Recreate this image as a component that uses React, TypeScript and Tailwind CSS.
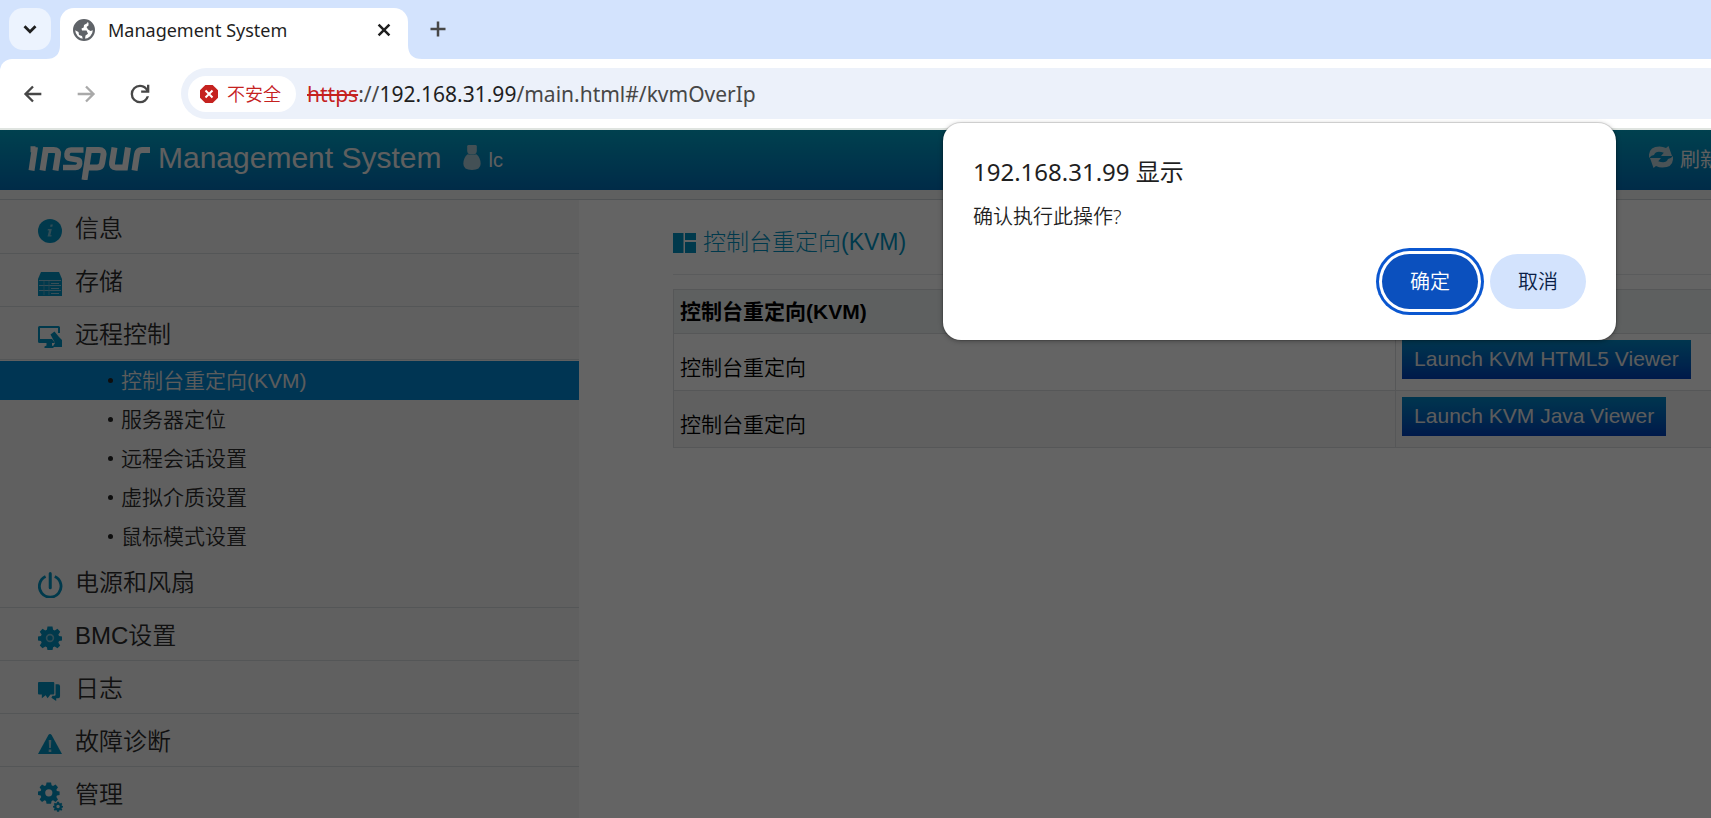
import React from "react";

type IconProps = { className?: string };

const Svg = ({ size, children }: { size: number; children: React.ReactNode }) => (
  <svg width={size} height={size} viewBox="0 0 24 24" fill="currentColor" aria-hidden="true" className="shrink-0">
    {children}
  </svg>
);

const GEAR =
  "M9.500 0.500h5l.6 3.200 1.600.8L19.500 2.800l2.700 3-1.800 2.700.6 1.600 3 .5v3.800l-3 .6-.6 1.700 1.800 2.700-2.700 2.800-2.800-1.800-1.600.8-.6 3h-5l-.6-3-1.600-.8-2.800 1.800-2.700-2.800 1.800-2.700-.6-1.700-3-.6v-3.800l3-.5.6-1.600-1.800-2.700 2.700-3 2.800 1.700 1.600-.8z";

const GEAR_HOLE = "M12 8a4 4 0 1 0 0 8 4 4 0 0 0 0-8z";

const InfoIcon = () => (
  <Svg size={24}>
    <circle cx="12" cy="12" r="12" />
    <path d="M12.600 5.600h2.200l-.5 2.200h-2.200zM9.900 10h3.900l-1.500 6.200h1.400l-.3 1.400H9.500l1.500-6.200H9.600z" fill="#7cc0d8" />
  </Svg>
);

const StorageIcon = () => (
  <Svg size={24}>
    <path d="M3 0h18l3 7H0z" />
    <path d="M0 7h24v17H0z" />
    <path d="M1 8.500h22M1 13.500h22M1 18.500h22" stroke="#8cc3d8" strokeWidth="1.200" />
    <path d="M6 9v14M11 9v14" stroke="#5fabc6" strokeWidth=".8" />
    <path d="M13 11.500h8M13 16.500h8M13 21.500h8" stroke="#8cc3d8" strokeWidth="1" />
  </Svg>
);

const RemoteIcon = () => (
  <Svg size={24}>
    <path d="M1.500 1h19A1.500 1.500 0 0 1 22 2.500V8h-2V3H2v11h12l3 4h-3v2.500l1.500 1V23h-9v-1.500l2-1V18H1.500A1.500 1.500 0 0 1 0 16.500v-14A1.500 1.500 0 0 1 1.500 1z" />
    <path d="M12.500 9.500l4-3 4.500 5.500 3 3v7h-9.500l2.500-4z" />
  </Svg>
);

const PowerIcon = () => (
  <Svg size={26}>
    <path d="M7 4.200a10 10 0 1 0 8.500 0" fill="none" stroke="currentColor" strokeWidth="2.600" />
    <path d="M11.300 1.500v13" fill="none" stroke="currentColor" strokeWidth="2.800" strokeLinecap="round" />
  </Svg>
);

const GearIcon = () => (
  <Svg size={24}>
    <path d={GEAR} />
    <circle cx="12" cy="12" r="3.400" fill="none" stroke="#7cbdd4" strokeWidth="1.600" />
  </Svg>
);

const LogIcon = () => (
  <Svg size={23}>
    <path d="M1 2h15a1 1 0 0 1 1 1v11a1 1 0 0 1-1 1h-3l-3 4-2-3-4 3v-4H1a1 1 0 0 1-1-1V3a1 1 0 0 1 1-1z" />
    <path d="M18.300 4.500H21a2 2 0 0 1 2 2V17a2 2 0 0 1-2 2h-2v3l-5-3.500 1-2h2.300a1 1 0 0 0 1-1z" />
  </Svg>
);

const WarnIcon = () => (
  <Svg size={24}>
    <path d="M12 2c.7 0 1.200.4 1.600 1L24 22H0L10.400 3c.4-.6.9-1 1.600-1z" />
    <path d="M10.700 8h2.600l-.4 8h-1.800zM10.700 17.500h2.600V20h-2.600z" fill="#a5cedd" />
  </Svg>
);

const ManageIcon = () => (
  <svg width="25" height="30" viewBox="0 0 25 30" fill="currentColor" fillRule="evenodd" aria-hidden="true" className="shrink-0">
    <path transform="scale(.9)" d={GEAR + GEAR_HOLE} />
    <path transform="translate(15 19.500) scale(.42)" d={GEAR + GEAR_HOLE} />
  </svg>
);

const Logo = () => (
  <svg width="123" height="34" viewBox="0 0 123 34" fill="none" stroke="#f2f2f2" strokeWidth="6" role="img" aria-label="inspur">
    <path d="M3.500 3.200h5M8 1L4.500 24.500" />
    <path d="M15.500 24.500L18.700 4h8q5 0 4.300 4.500L28.500 24.500" />
    <path d="M56.500 4H44q-3.500 0-4 4-.4 4 3 4.500l7 1.200q3.200.6 2.700 4-.5 3.800-4.200 3.800H36" strokeWidth="5.500" />
    <path d="M57.500 34L62 4h10q5.200 0 4.500 4.800l-1.400 8.500q-.7 4.200-5 4.200h-9" />
    <path d="M87.500 1.500l-2.400 15q-.8 5 3.900 5h9L101 1.500" />
    <path d="M107.500 24.500L110 8.500Q110.700 4 115 4h8" />
  </svg>
);

const UserIcon = () => (
  <svg width="18" height="25" viewBox="0 0 18 26" fill="#a9c8d4" aria-hidden="true">
    <path d="M4 1.500Q4 0 5.500 0h7Q14 0 14 1.500V6q0 3-3 4H7q-3-1-3-4z" />
    <path d="M4.500 9.500q4.500 1.500 9 0 4.500 3.500 4.500 10 0 6.500-9 6.500t-9-6.500q0-6.500 4.500-10z" />
  </svg>
);

const RefreshIcon = () => (
  <svg width="24" height="22" viewBox="0 0 24 22" fill="#b9d0d8" aria-hidden="true">
    <path d="M0 12Q-1 .5 10.500.5q3.500 0 6.500 1.500L19.500 0 23 10H12l2.800-3.200Q7 4 5 9q-2.500 0-5 3z" />
    <path d="M24 10q1 11.500-10.500 11.500-3.500 0-6.500-1.500L4.500 22 1 12h11l-2.800 3.200Q17 18 19 13q2.500 0 5-3z" />
  </svg>
);

const PanelIcon = () => (
  <svg width="23" height="20" viewBox="0 0 23 20" fill="currentColor" aria-hidden="true">
    <path d="M0 0h10.500v20H0zM12 0h11v7H12zM12 9h11v11H12z" />
  </svg>
);

const GlobeIcon = () => (
  <svg width="22" height="22" viewBox="0 0 22 22" aria-hidden="true">
    <circle cx="11" cy="11" r="9.900" fill="#fff" stroke="#5f6368" strokeWidth="2.200" />
    <path d="M2.500 6L8 1.500l6 .5.500 2-3.500 2-.3 2.500L8.500 9.500l.5 2h4.500l1.500 3.200-2.500 1.800-.5 3.500-2 .5-1-3.500-3-1-.5-3L1.500 11z" fill="#5f6368" />
    <path d="M15.500 3l4.500 3.500.8 4.500-3.300 1-2.500-1.500-1.500-2.500 2-1.500z" fill="#5f6368" />
  </svg>
);

const Stroke = ({ d, size, width, className }: { d: string; size: number; width: number } & IconProps) => (
  <svg width={size} height={size} viewBox="0 0 24 24" fill="none" stroke="currentColor" strokeWidth={width} className={className} aria-hidden="true">
    <path d={d} />
  </svg>
);

const NavRow = ({ icon, label }: { icon: React.ReactNode; label: string }) => (
  <a
    href={"#/" + label}
    className="flex h-[53px] items-center border-b border-[#d2d7da] pl-[38px] text-[24px] leading-[30px] text-[#2b2b2b]"
  >
    <span className="flex w-[37px] pt-2 text-[#0090bd]">{icon}</span>
    <span className="pt-[3px]">{label}</span>
  </a>
);

const SUB_ITEMS = ["控制台重定向(KVM)", "服务器定位", "远程会话设置", "虚拟介质设置", "鼠标模式设置"];

const VIEWERS = ["Launch KVM HTML5 Viewer", "Launch KVM Java Viewer"];

function BrowserChrome() {
  return (
    <header className="font-['Noto_Sans','Noto_Sans_CJK_SC',sans-serif]">
      <div className="flex h-[59px] items-end bg-[#d3e3fd] pl-[9px]">
        <button aria-label="搜索标签页" className="mb-[9px] flex size-[42px] items-center justify-center rounded-[14px] bg-[#ecf3fe] text-[#1f1f1f]">
          <Stroke d="M6 9l6 6 6-6" size={22} width={3} />
        </button>
        <svg width="14" height="14" viewBox="0 0 14 14" className="-ml-[5px] shrink-0" aria-hidden="true">
          <path d="M14 0v14H0Q14 14 14 0z" fill="#fff" />
        </svg>
        <div className="flex h-[51px] w-[348px] items-center rounded-t-[14px] bg-white pr-[14px] pb-2 pl-[13px]">
          <GlobeIcon />
          <span className="ml-[13px] flex-1 text-[18px] leading-6 text-[#1f1f1f]">Management System</span>
          <button aria-label="关闭标签页" className="text-[#1f1f1f]">
            <Stroke d="M5.500 5.500l13 13M18.500 5.500l-13 13" size={20} width={3} />
          </button>
        </div>
        <svg width="14" height="14" viewBox="0 0 14 14" className="shrink-0" aria-hidden="true">
          <path d="M0 0v14h14Q0 14 0 0z" fill="#fff" />
        </svg>
        <button aria-label="新标签页" className="mb-[20px] ml-[6px] text-[#474747]">
          <Stroke d="M12 3v18M3 12h18" size={20} width={3} />
        </button>
      </div>
      <div className="bg-[#d3e3fd]">
        <div className="flex h-[69px] items-center rounded-tl-[12px] bg-white pl-[20px]">
          <button aria-label="后退" className="mr-[27px] text-[#474747]">
            <Stroke d="M22 12H3M12 3l-9 9 9 9" size={26} width={2.8} className="p-[3px]" />
          </button>
          <button aria-label="前进" className="mr-[27px] text-[#a9a9a9]">
            <Stroke d="M2 12h19M12 3l9 9-9 9" size={26} width={2.8} className="p-[3px]" />
          </button>
          <button aria-label="重新加载" className="mr-[27px] text-[#474747]">
            <svg width="28" height="28" viewBox="0 0 24 24" fill="currentColor" aria-hidden="true">
              <path d="M12 20q-3.350 0-5.675-2.325T4 12q0-3.350 2.325-5.675T12 4q1.725 0 3.300.713T18 6.750V4h2v7h-7V9h4.200q-.8-1.400-2.187-2.200T12 6Q9.500 6 7.750 7.750T6 12q0 2.500 1.750 4.250T12 18q1.925 0 3.475-1.100T17.650 14h2.100q-.7 2.650-2.850 4.325T12 20z" />
            </svg>
          </button>
          <div className="flex h-[51px] flex-1 items-center rounded-l-full bg-[#ecf1fa] pl-[7px]">
            <button className="flex h-9 w-[108px] items-center rounded-full bg-white pl-[12px] text-[18px] leading-6 text-[#c5221f]">
              <svg width="18" height="18" viewBox="0 0 18 18" className="mr-[9px]" aria-hidden="true">
                <path d="M5.300 0h7.400L18 5.300v7.400L12.700 18H5.300L0 12.700V5.300z" fill="#c5221f" />
                <path d="M5.500 5.500l7 7M12.500 5.500l-7 7" stroke="#fff" strokeWidth="2" />
              </svg>
              <span className="font-[350]">不安全</span>
            </button>
            <span className="ml-[11px] text-[21px] leading-7 text-[#474747]">
              <span className="text-[#c5221f] line-through">https</span>://<span className="text-[#1f1f1f]">192.168.31.99</span>/main.html#/kvmOverIp
            </span>
          </div>
        </div>
      </div>
    </header>
  );
}

function ManagementPage() {
  return (
    <div className="flex flex-1 flex-col bg-[#fafafa] font-['Liberation_Sans','Noto_Sans_CJK_SC',sans-serif]">
      <div className="flex h-[60px] items-center overflow-hidden bg-linear-to-b from-[#00a2c5] to-[#006cb4] pl-[27px] whitespace-nowrap text-[#ededed]">
        <span className="pt-[6px]">
          <Logo />
        </span>
        <h1 className="ml-2 pb-1 text-[30px] leading-9">Management System</h1>
        <span className="ml-[22px] pb-[6px]">
          <UserIcon />
        </span>
        <span className="ml-[7px] flex-1 text-[20px] leading-6">lc</span>
        <a href="#/refresh" className="flex w-[62px] shrink-0 items-center gap-[7px] text-[20px] leading-6">
          <span className="shrink-0 pb-[7px]">
            <RefreshIcon />
          </span>
          刷新
        </a>
      </div>
      <div className="h-[10px] border-b border-[#c8cfd4] bg-[#eef0f1]" />
      <div className="flex flex-1">
        <nav className="w-[34%] max-w-[579px] shrink-0 bg-[#efefef] pt-px font-[350]">
          <NavRow icon={<InfoIcon />} label="信息" />
          <NavRow icon={<StorageIcon />} label="存储" />
          <NavRow icon={<RemoteIcon />} label="远程控制" />
          <ul className="mt-px -mb-px">
            {SUB_ITEMS.map((label, i) => (
              <li key={label}>
                <a
                  href={"#/" + label}
                  className={
                    i === 0
                      ? "flex h-[39px] items-center bg-[#0085d0] pl-[108px] text-[21px] leading-6 text-[#e6e6e6]"
                      : "flex h-[39px] items-center pl-[108px] text-[21px] leading-6 text-[#2b2b2b]"
                  }
                >
                  <span className="mr-2 size-[5px] rounded-full bg-[#222]" />
                  {label}
                </a>
              </li>
            ))}
          </ul>
          <NavRow icon={<PowerIcon />} label="电源和风扇" />
          <NavRow icon={<GearIcon />} label="BMC设置" />
          <NavRow icon={<LogIcon />} label="日志" />
          <NavRow icon={<WarnIcon />} label="故障诊断" />
          <NavRow icon={<ManageIcon />} label="管理" />
        </nav>
        <main className="flex-1 pt-[24px] pl-[94px]">
          <h2 className="flex h-[51px] items-start gap-[7px] border-b border-[#e2e4e6] text-[23px] leading-9 font-light text-[#0090bd]">
            <span className="pt-[9px]">
              <PanelIcon />
            </span>
            控制台重定向(KVM)
          </h2>
          <table className="mt-[14px] w-full border-collapse text-left text-[21px] leading-6 text-black">
            <thead>
              <tr className="h-[44px] bg-[#eceff1]">
                <th colSpan={2} className="border border-r-0 border-[#d6dadc] pl-[6px] font-bold">
                  控制台重定向(KVM)
                </th>
              </tr>
            </thead>
            <tbody>
              {VIEWERS.map((viewer, i) => (
                <tr key={viewer} className={i === 0 ? "h-[57px] bg-[#fafafa]" : "h-[57px] bg-[#efefef]"}>
                  <td className="w-[69.6%] border border-[#d6dadc] pt-[12px] pl-[6px] font-[350]">控制台重定向</td>
                  <td className="border border-r-0 border-[#d6dadc] pb-[6px] pl-[6px] whitespace-nowrap">
                    <button className="block h-[39px] bg-linear-to-b from-[#0086c4] to-[#003fb8] px-3 leading-6 text-[#e6e6e6]">
                      {viewer}
                    </button>
                  </td>
                </tr>
              ))}
            </tbody>
          </table>
        </main>
      </div>
    </div>
  );
}

function ConfirmDialog() {
  return (
    <div
      role="dialog"
      aria-modal="true"
      aria-labelledby="confirm-title"
      className="absolute top-[123px] right-[95px] flex w-[673px] flex-col rounded-[18px] bg-white px-[30px] pt-[32px] pb-[31px] font-['Noto_Sans','Noto_Sans_CJK_SC',sans-serif] text-[#1f1f1f] shadow-[0_0_0_1px_rgba(0,0,0,0.1),0_1px_5px_rgba(0,0,0,0.35)]"
    >
      <h2 id="confirm-title" className="text-[24px] leading-[34px]">
        192.168.31.99 显示
      </h2>
      <p className="mt-[14px] text-[20px] leading-[28px] font-[350]">确认执行此操作?</p>
      <div className="mt-[23px] flex justify-end gap-3 text-[20px] leading-6">
        <button className="h-[55px] w-24 rounded-full bg-[#0b50be] font-[350] text-white ring-3 ring-[#0b57d0] ring-offset-3 ring-offset-white">
          确定
        </button>
        <button className="h-[55px] w-24 rounded-full bg-[#d3e3fd] font-[350] text-[#0a1e46]">取消</button>
      </div>
    </div>
  );
}

export default function App() {
  return (
    <div className="relative flex h-screen flex-col overflow-hidden">
      <BrowserChrome />
      <div className="h-[2px] shrink-0 bg-[#dfe4e0]" />
      <div className="relative flex flex-1 flex-col overflow-hidden">
        <ManagementPage />
        <div className="absolute inset-0 bg-black/60" />
      </div>
      <ConfirmDialog />
    </div>
  );
}
